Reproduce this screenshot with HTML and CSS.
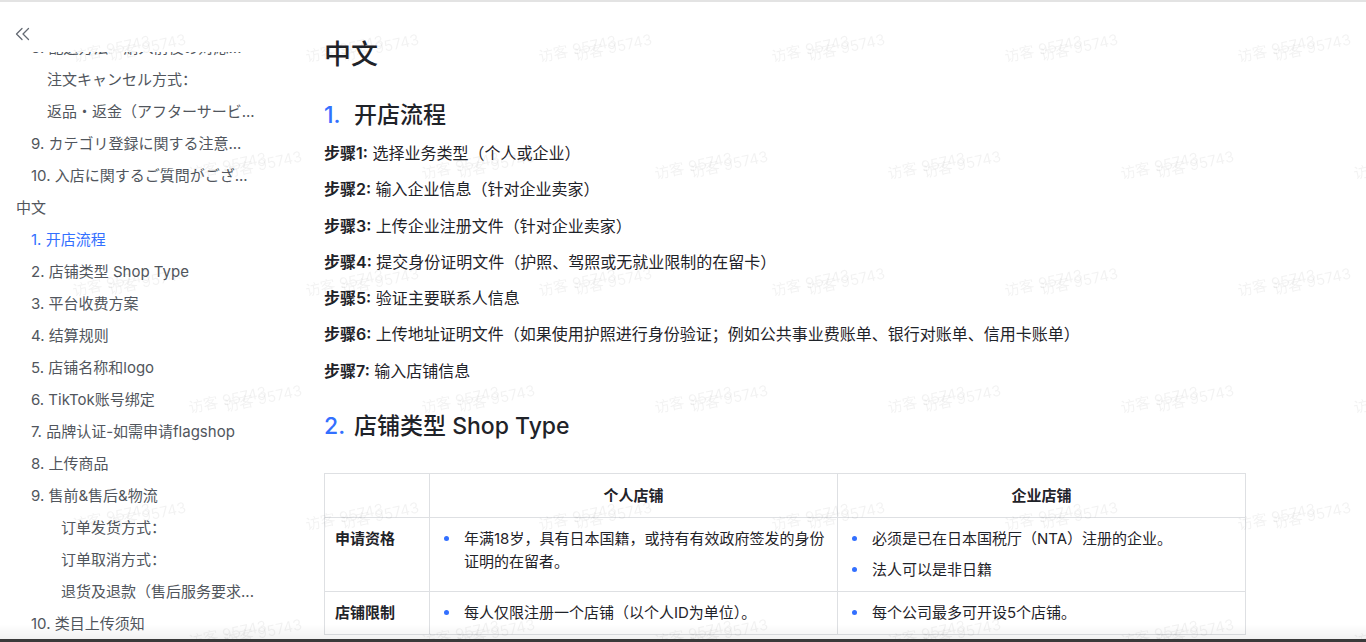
FILE: index.html
```html
<html>
<head>
<meta name="viewport" content="width=device-width, initial-scale=1">
<link rel="stylesheet" href="styles.css">
</head>
<body>
<div class="page">
  <aside class="sidebar">
    <div class="toggle">
      <svg class="toggle-icon" viewBox="0 0 16 14" width="16" height="14">
        <path d="M8 1.5 L2.5 7 L8 12.5" />
        <path d="M14.5 1.5 L9 7 L14.5 12.5" />
      </svg>
    </div>
    <div class="catalog">
      <ul class="catalog-list">
        <li class="lv2">8. 配送方法・購入前後の対応...</li>
        <li class="lv3j">注文キャンセル方式：</li>
        <li class="lv3j">返品・返金（アフターサービ...</li>
        <li class="lv2">9. カテゴリ登録に関する注意...</li>
        <li class="lv2">10. 入店に関するご質問がござ...</li>
        <li class="lv1">中文</li>
        <li class="lv2 active">1. 开店流程</li>
        <li class="lv2">2. 店铺类型 Shop Type</li>
        <li class="lv2">3. 平台收费方案</li>
        <li class="lv2">4. 结算规则</li>
        <li class="lv2">5. 店铺名称和logo</li>
        <li class="lv2">6. TikTok账号绑定</li>
        <li class="lv2">7. 品牌认证-如需申请flagshop</li>
        <li class="lv2">8. 上传商品</li>
        <li class="lv2">9. 售前&amp;售后&amp;物流</li>
        <li class="lv3">订单发货方式：</li>
        <li class="lv3">订单取消方式：</li>
        <li class="lv3">退货及退款（售后服务要求...</li>
        <li class="lv2">10. 类目上传须知</li>
      </ul>
    </div>
  </aside>

  <main class="doc">
    <div class="doc-inner">
      <h1 class="doc-title">中文</h1>

      <h2 class="section-title first"><span class="num">1.</span>开店流程</h2>
      <div class="steps">
        <p><b>步骤1:</b> 选择业务类型（个人或企业）</p>
        <p><b>步骤2:</b> 输入企业信息（针对企业卖家）</p>
        <p><b>步骤3:</b> 上传企业注册文件（针对企业卖家）</p>
        <p><b>步骤4:</b> 提交身份证明文件（护照、驾照或无就业限制的在留卡）</p>
        <p><b>步骤5:</b> 验证主要联系人信息</p>
        <p><b>步骤6:</b> 上传地址证明文件（如果使用护照进行身份验证；例如公共事业费账单、银行对账单、信用卡账单）</p>
        <p><b>步骤7:</b> 输入店铺信息</p>
      </div>

      <h2 class="section-title second"><span class="num">2.</span>店铺类型 Shop Type</h2>

      <table class="shop-table">
        <colgroup>
          <col class="col-label">
          <col class="col-main">
          <col class="col-main">
        </colgroup>
        <tr>
          <th></th>
          <th>个人店铺</th>
          <th>企业店铺</th>
        </tr>
        <tr>
          <td class="row-label">申请资格</td>
          <td>
            <ul class="dots">
              <li>年满18岁，具有日本国籍，或持有有效政府签发的身份证明的在留者。</li>
            </ul>
          </td>
          <td>
            <ul class="dots">
              <li>必须是已在日本国税厅（NTA）注册的企业。</li>
              <li>法人可以是非日籍</li>
            </ul>
          </td>
        </tr>
        <tr>
          <td class="row-label">店铺限制</td>
          <td>
            <ul class="dots">
              <li>每人仅限注册一个店铺（以个人ID为单位）。</li>
            </ul>
          </td>
          <td>
            <ul class="dots">
              <li>每个公司最多可开设5个店铺。</li>
            </ul>
          </td>
        </tr>
      </table>
    </div>
  </main>
</div>

<div class="watermark">
  <div class="wm-row">
    <div class="wm-mark"><span>访客 95743</span><span>访客 95743</span></div>
    <div class="wm-mark"><span>访客 95743</span><span>访客 95743</span></div>
    <div class="wm-mark"><span>访客 95743</span><span>访客 95743</span></div>
    <div class="wm-mark"><span>访客 95743</span><span>访客 95743</span></div>
    <div class="wm-mark"><span>访客 95743</span><span>访客 95743</span></div>
    <div class="wm-mark"><span>访客 95743</span><span>访客 95743</span></div>
  </div>
  <div class="wm-row shift">
    <div class="wm-mark"><span>访客 95743</span><span>访客 95743</span></div>
    <div class="wm-mark"><span>访客 95743</span><span>访客 95743</span></div>
    <div class="wm-mark"><span>访客 95743</span><span>访客 95743</span></div>
    <div class="wm-mark"><span>访客 95743</span><span>访客 95743</span></div>
    <div class="wm-mark"><span>访客 95743</span><span>访客 95743</span></div>
    <div class="wm-mark"><span>访客 95743</span><span>访客 95743</span></div>
  </div>
  <div class="wm-row">
    <div class="wm-mark"><span>访客 95743</span><span>访客 95743</span></div>
    <div class="wm-mark"><span>访客 95743</span><span>访客 95743</span></div>
    <div class="wm-mark"><span>访客 95743</span><span>访客 95743</span></div>
    <div class="wm-mark"><span>访客 95743</span><span>访客 95743</span></div>
    <div class="wm-mark"><span>访客 95743</span><span>访客 95743</span></div>
    <div class="wm-mark"><span>访客 95743</span><span>访客 95743</span></div>
  </div>
  <div class="wm-row shift">
    <div class="wm-mark"><span>访客 95743</span><span>访客 95743</span></div>
    <div class="wm-mark"><span>访客 95743</span><span>访客 95743</span></div>
    <div class="wm-mark"><span>访客 95743</span><span>访客 95743</span></div>
    <div class="wm-mark"><span>访客 95743</span><span>访客 95743</span></div>
    <div class="wm-mark"><span>访客 95743</span><span>访客 95743</span></div>
    <div class="wm-mark"><span>访客 95743</span><span>访客 95743</span></div>
  </div>
  <div class="wm-row">
    <div class="wm-mark"><span>访客 95743</span><span>访客 95743</span></div>
    <div class="wm-mark"><span>访客 95743</span><span>访客 95743</span></div>
    <div class="wm-mark"><span>访客 95743</span><span>访客 95743</span></div>
    <div class="wm-mark"><span>访客 95743</span><span>访客 95743</span></div>
    <div class="wm-mark"><span>访客 95743</span><span>访客 95743</span></div>
    <div class="wm-mark"><span>访客 95743</span><span>访客 95743</span></div>
  </div>
  <div class="wm-row shift">
    <div class="wm-mark"><span>访客 95743</span><span>访客 95743</span></div>
    <div class="wm-mark"><span>访客 95743</span><span>访客 95743</span></div>
    <div class="wm-mark"><span>访客 95743</span><span>访客 95743</span></div>
    <div class="wm-mark"><span>访客 95743</span><span>访客 95743</span></div>
    <div class="wm-mark"><span>访客 95743</span><span>访客 95743</span></div>
    <div class="wm-mark"><span>访客 95743</span><span>访客 95743</span></div>
  </div>
</div>

<div class="screen-edge"></div>
</body>
</html>
```

FILE: styles.css
```css
html, body {
  height: 100%;
}

body {
  margin: 0;
  background: #ffffff;
  color: #1f2329;
  font-family: Inter, "Noto Sans CJK SC", sans-serif;
  border-top: 2px solid #e3e3e3;
  box-sizing: border-box;
  overflow: hidden;
}

.page {
  display: flex;
  height: 100%;
}

/* catalog on the left */
.sidebar {
  flex: none;
  width: 300px;
  display: flex;
  flex-direction: column;
}

.toggle {
  height: 50px;
  padding: 25px 0 0 14px;
  box-sizing: border-box;
}

.toggle-icon {
  display: block;
  fill: none;
  stroke: #646a73;
  stroke-width: 1.3;
  stroke-linecap: round;
  stroke-linejoin: round;
}

.catalog {
  flex: 1;
  overflow: hidden;
}

.catalog-list {
  list-style: none;
  margin: -20px 0 0 0;
  padding: 0;
}

.catalog-list li {
  height: 32px;
  line-height: 32px;
  font-size: 15px;
  color: #51565d;
  white-space: nowrap;
}

.lv1 { padding-left: 16px; }
.lv2 { padding-left: 31px; }
.lv3j { padding-left: 47px; }
.lv3 { padding-left: 61px; }

.catalog-list li.active {
  color: #3370ff;
}

/* document */
.doc {
  flex: 1;
  padding: 34px 0 0 24px;
}

.doc-inner {
  width: 921px;
}

.doc-title {
  margin: 0;
  font-size: 27px;
  line-height: 38px;
  font-weight: 500;
}

.section-title {
  margin: 0;
  font-size: 23px;
  line-height: 32px;
  font-weight: 500;
}

.section-title.first { margin-top: 25px; }
.section-title.second { margin-top: 21px; }

.section-title .num {
  display: inline-block;
  width: 30px;
  color: #3370ff;
}

.steps {
  margin-top: 4px;
}

.steps p {
  margin: 0;
  padding: 5px 0;
  font-size: 16px;
  line-height: 26.3px;
}

.steps b {
  font-weight: 600;
}

.shop-table {
  margin-top: 31px;
  border-collapse: collapse;
  table-layout: fixed;
  width: 921px;
  font-size: 15px;
  line-height: 23px;
}

.col-label { width: 105px; }
.col-main { width: 408px; }

.shop-table th,
.shop-table td {
  border: 1px solid #dee0e3;
  vertical-align: top;
}

.shop-table th {
  padding: 10px 14px;
  font-weight: 600;
  text-align: center;
}

.shop-table td {
  padding: 9px 8px 10px 14px;
}

.shop-table td.row-label {
  padding-left: 10px;
  font-weight: 600;
}

.dots {
  list-style: none;
  margin: 0;
  padding: 0;
}

.dots li {
  position: relative;
  padding-left: 20px;
}

.dots li + li {
  margin-top: 8px;
}

.dots li::before {
  content: "";
  position: absolute;
  left: 0;
  top: 9px;
  width: 5px;
  height: 5px;
  border-radius: 50%;
  background: #3370ff;
}

/* faint visitor watermark over the page */
.watermark {
  position: fixed;
  inset: 0;
  padding-top: 40px;
  pointer-events: none;
  overflow: hidden;
}

.wm-row {
  display: flex;
  height: 117px;
  padding-left: 72px;
}

.wm-row.shift {
  padding-left: 188px;
}

.wm-mark {
  flex: none;
  width: 233px;
  font-size: 15px;
  line-height: 18px;
  color: rgba(0, 0, 0, 0.05);
  white-space: nowrap;
  transform: rotate(-12deg);
  transform-origin: 40px 9px;
}

.wm-mark span {
  display: block;
}

.wm-mark span + span {
  margin: -12px 0 0 35px;
}

.screen-edge {
  position: fixed;
  left: 0;
  right: 0;
  bottom: 0;
  height: 18px;
  background: linear-gradient(to bottom, rgba(0, 0, 0, 0) 0, rgba(0, 0, 0, 0.05) 15px, #3a3a3a 15px, #3a3a3a 18px);
  pointer-events: none;
}
```
